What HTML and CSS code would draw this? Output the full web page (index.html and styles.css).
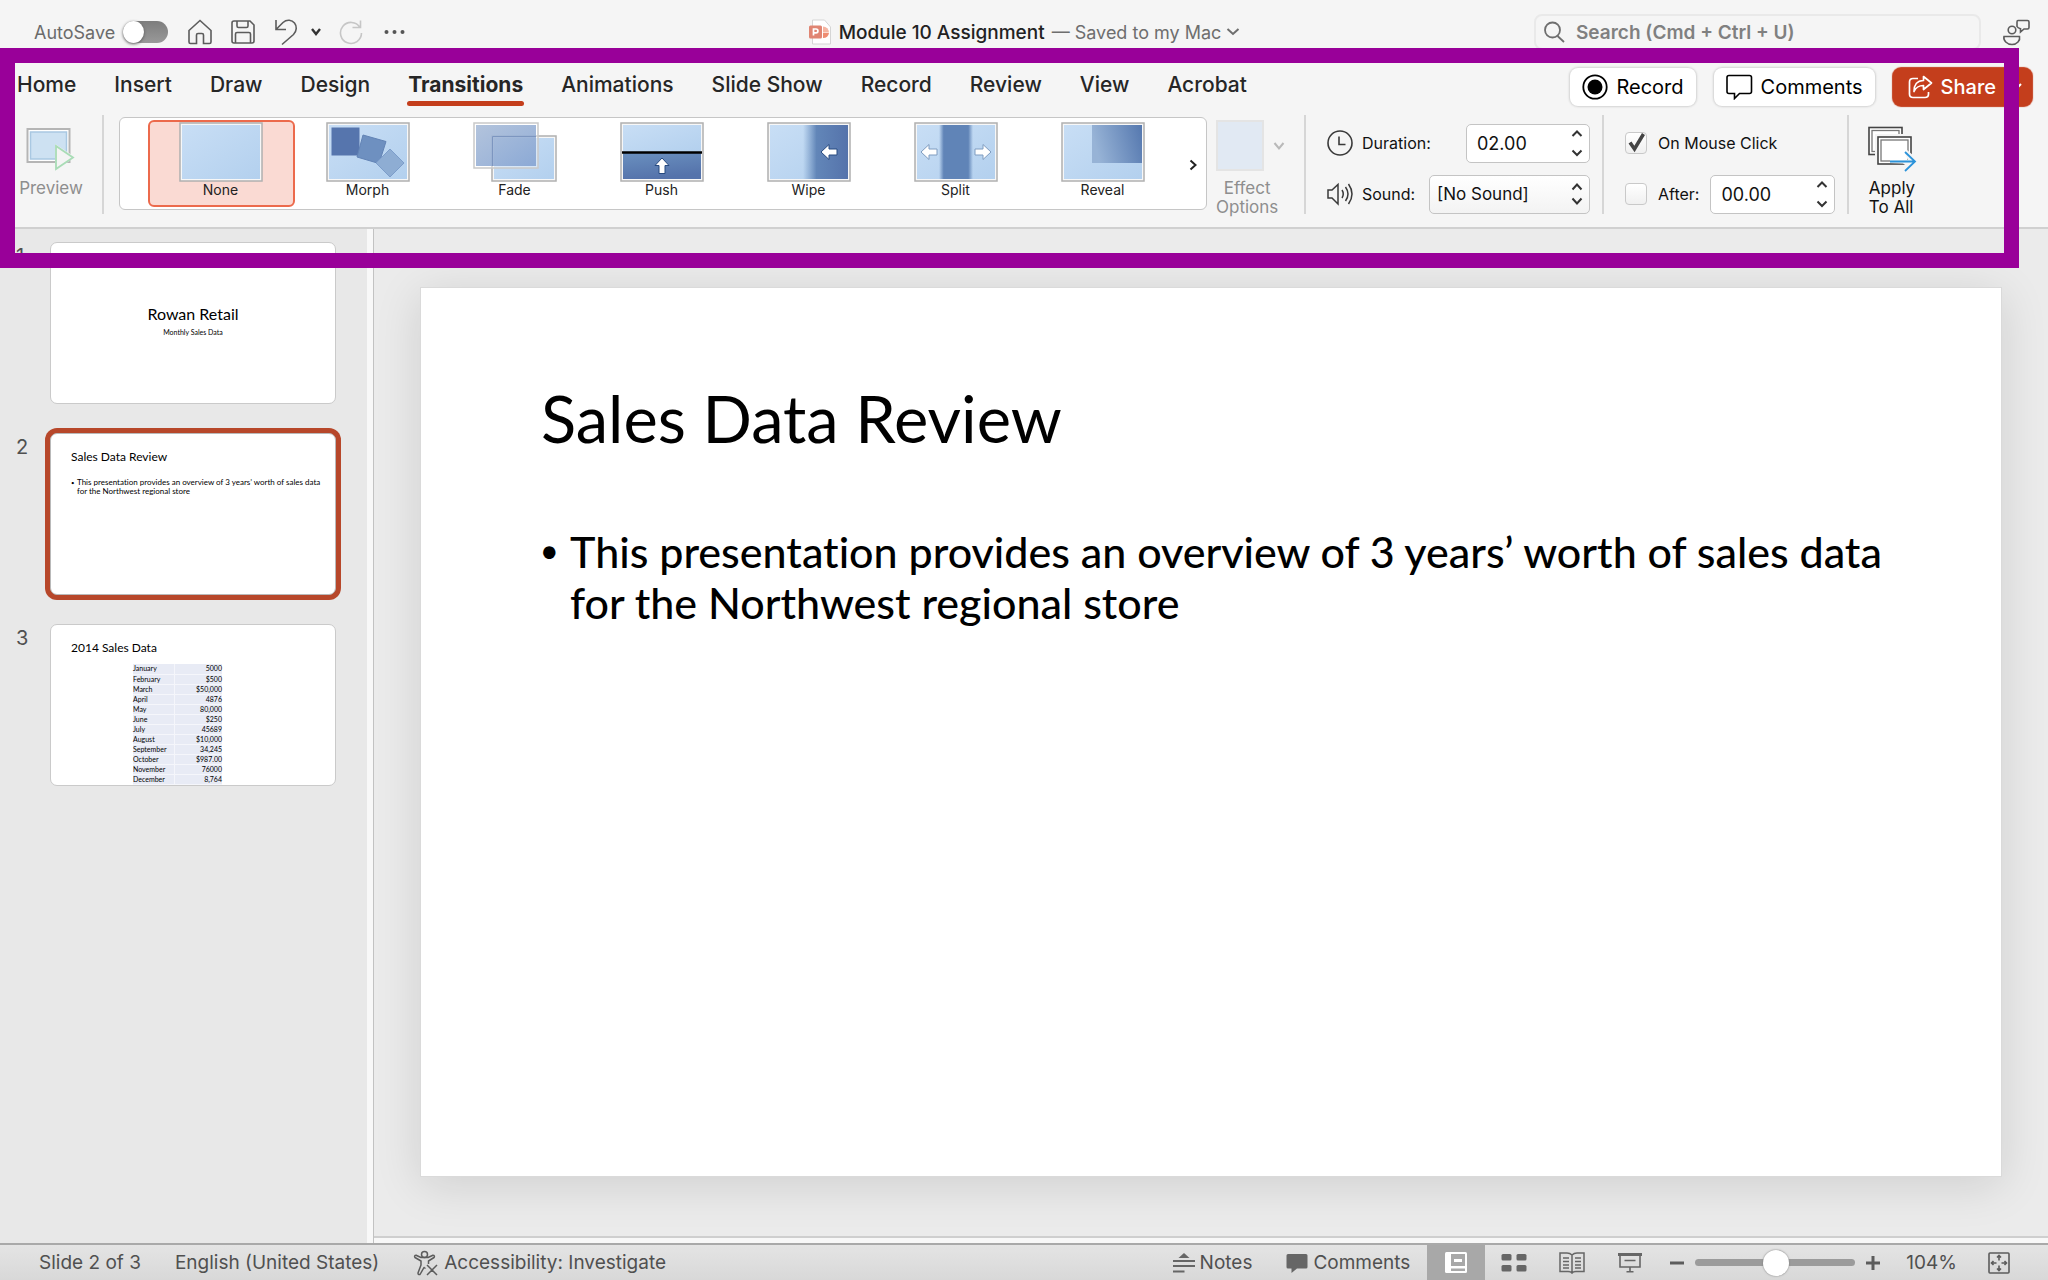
FILE: index.html
```html
<!DOCTYPE html>
<html lang="en">
<head>
<meta charset="utf-8">
<title>Module 10 Assignment</title>
<link rel="stylesheet" href="styles.css">
</head>
<body>
<svg class="defs" aria-hidden="true">
  <defs>
    <linearGradient id="sky" x1="0" y1="0" x2="1" y2="1"><stop offset="0" stop-color="#c8def5"/><stop offset="1" stop-color="#b3d0ee"/></linearGradient>
    <linearGradient id="deep" x1="0" y1="0" x2="0.3" y2="1"><stop offset="0" stop-color="#6a90bf"/><stop offset="1" stop-color="#5573ab"/></linearGradient>
    <linearGradient id="wipe" x1="0" y1="0" x2="1" y2="0"><stop offset="0" stop-color="#6a90bf" stop-opacity="0"/><stop offset="0.3" stop-color="#6286b8"/><stop offset="1" stop-color="#5573ab"/></linearGradient>
    <linearGradient id="split" x1="0" y1="0" x2="1" y2="0"><stop offset="0" stop-color="#6084b7" stop-opacity="0"/><stop offset="0.14" stop-color="#6084b7"/><stop offset="0.86" stop-color="#6084b7"/><stop offset="1" stop-color="#6084b7" stop-opacity="0"/></linearGradient>
    <linearGradient id="reveal" x1="0" y1="0.2" x2="1" y2="0"><stop offset="0" stop-color="#97b3d6"/><stop offset="1" stop-color="#5578af"/></linearGradient>
    <linearGradient id="veil" x1="0" y1="0" x2="1" y2="1"><stop offset="0" stop-color="#a5b9d6"/><stop offset="1" stop-color="#7f9fd0"/></linearGradient>
  </defs>
</svg>

<header class="chrome">
  <div class="titlebar">
    <div class="quick">
      <label class="autosave" for="autosave">AutoSave</label>
      <input class="toggle" type="checkbox" id="autosave">
      <button class="icon-btn" aria-label="Home"><svg width="26" height="26" viewBox="0 0 26 26"><path d="M2 11.5 13 1.5l11 10V23q0 1.5-1.5 1.5h-6V16q0-1.500-1.500-1.500h-4Q9.500 14.500 9.500 16v8.500h-6Q2 24.500 2 23z"/></svg></button>
      <button class="icon-btn" aria-label="Save"><svg width="26" height="26" viewBox="0 0 26 26"><path d="M2 4q0-2 2-2h16l4 4v16q0 2-2 2H4q-2 0-2-2zM7 2v5q0 1.500 1.500 1.500h8Q18 8.500 18 7V2M5.500 24v-9q0-1.500 1.500-1.500h12q1.500 0 1.500 1.500v9"/></svg></button>
      <button class="icon-btn undo" aria-label="Undo"><svg width="26" height="28" viewBox="0 0 26 28"><path d="M3 2v9.500h10M3.500 11 10 4.500C14 1 19 2 21.500 5s2.500 8-1 11.500L9 26.500"/></svg></button>
      <button class="icon-btn bold" aria-label="Undo history"><svg width="12" height="10" viewBox="0 0 12 10"><path d="m2 2 4 5 4-5"/></svg></button>
      <button class="icon-btn faded" aria-label="Redo" disabled><svg width="26" height="26" viewBox="0 0 26 26"><path d="M22 8.500A10.500 10.500 0 1 0 23.500 14M22.500 1.500v7h-8"/></svg></button>
      <button class="icon-btn dots" aria-label="More"><svg width="24" height="8" viewBox="0 0 24 8"><circle cx="3.500" cy="4" r="2"/><circle cx="11.500" cy="4" r="2"/><circle cx="19.500" cy="4" r="2"/></svg></button>
    </div>
    <div class="doc">
      <svg width="24" height="26" viewBox="0 0 24 26"><path d="M4.500 1h12l6 7v17h-18z" fill="#fff" stroke="#d5d5d5"/><path d="M15 7.500a6 6 0 0 1 6 6h-6z" fill="#f5b5a2"/><path d="M15 14h6a6 6 0 0 1-6 5z" fill="#ef8d72"/><rect x="1" y="6.500" width="13" height="13" rx="1.500" fill="#e08573"/><path d="M5.500 16.500v-6.500h2.500a1.800 1.800 0 0 1 0 3.800H5.500" fill="none" stroke="#fff" stroke-width="1.700"/></svg>
      <span class="doc-name">Module 10 Assignment</span>
      <button class="doc-state">— Saved to my Mac <svg width="14" height="10" viewBox="0 0 14 10"><path d="m1.500 2 5.500 5 5.500-5" fill="none" stroke="#6e6e6e" stroke-width="2"/></svg></button>
    </div>
    <div class="finder">
      <div class="search">
        <svg width="24" height="24" viewBox="0 0 24 24"><circle cx="9.500" cy="10" r="7.500"/><path d="m14.500 16 6.500 6"/></svg>
        <input type="text" aria-label="Search" placeholder="Search (Cmd + Ctrl + U)">
      </div>
      <button class="icon-btn" aria-label="Collaboration"><svg width="28" height="28" viewBox="0 0 28 28"><circle cx="10" cy="12" r="3.800"/><path d="M2 18.500h15.500c1 4-2.500 8-7.500 8s-9-4-8-8zM16 2.500h9.500q1.500 0 1.500 1.500v5.500q0 1.500-1.500 1.500H22l-3.500 3v-3.300q-2.800-.7-3.500-2.200V4q0-1.500 1-1.500"/></svg></button>
    </div>
  </div>

  <div class="tabrow">
    <nav class="tabs">
      <a href="#home">Home</a><a href="#insert">Insert</a><a href="#draw">Draw</a><a href="#design">Design</a><a class="current" href="#transitions">Transitions</a><a href="#animations">Animations</a><a href="#slideshow">Slide Show</a><a href="#record">Record</a><a href="#review">Review</a><a href="#view">View</a><a href="#acrobat">Acrobat</a>
    </nav>
    <div class="actions">
      <button class="pill"><svg width="26" height="26" viewBox="0 0 26 26"><circle cx="13" cy="13" r="11.700" fill="none" stroke="#000" stroke-width="1.800"/><circle cx="13" cy="13" r="7.500"/></svg>Record</button>
      <button class="pill"><svg width="27" height="26" viewBox="0 0 27 26"><path d="M3 1.500h20.500q2 0 2 2v14q0 2-2 2H13.500l-5 5v-5H3q-2 0-2-2v-14q0-2 2-2z" fill="none" stroke="#000" stroke-width="1.600"/></svg>Comments</button>
      <button class="pill share"><svg width="25" height="24" viewBox="0 0 25 24"><path d="M10 3.500H5q-3.500 0-3.500 3.500v12q0 3.500 3.500 3.500h12q3.500 0 3.500-3.500v-2M15.500 1.500 23.500 8l-8 6.500v-4c-5 0-7.500 1.500-9.500 6C6 10 9 5.500 15.500 5.500z" fill="none" stroke="#fff" stroke-width="1.700" stroke-linejoin="round"/></svg>Share<svg class="share-more" width="12" height="10" viewBox="0 0 12 10"><path d="m1 2 5 5 5-5" fill="none" stroke="#fff" stroke-width="2"/></svg></button>
    </div>
  </div>

  <div class="ribbon">
    <button class="big preview" disabled>
      <svg width="50" height="46" viewBox="0 0 50 46"><rect x="1.500" y="2" width="42" height="33" fill="#fff" stroke="#b5b5b5" stroke-width="2"/><rect x="4.500" y="5" width="36" height="27" fill="#cde1f2" stroke="#a9c8e2" stroke-width="1.500"/><path d="M29 17v27l20-14z" fill="#f4f4f4"/><path d="M30 19v23l17-11.500z" fill="#f4f4f4" stroke="#a9dcb6" stroke-width="1.800"/></svg>
      <span>Preview</span>
    </button>
    <div class="rule"></div>
    <div class="gallery">
      <button class="tile selected"><svg class="art" viewBox="0 0 84 60"><rect x="1" y="1" width="82" height="58" fill="#f7f7f7" stroke="#b0b0b0" stroke-width="1.500"/><rect x="3" y="3" width="78" height="54" fill="url(#sky)"/></svg>None</button>
      <button class="tile"><svg class="art" viewBox="0 0 84 60"><rect x="1" y="1" width="82" height="58" fill="#f7f7f7" stroke="#b0b0b0" stroke-width="1.500"/><rect x="3" y="3" width="78" height="54" fill="url(#sky)"/><path d="M5.500 5.500h28v28h-28z" fill="#5675ad"/><path d="m37 13 23 6.500-7 22-22-6.500z" fill="#6e90c0" stroke="#6283b5"/><path d="m64 27 14 14-14 14-14-14z" fill="#8eadd3" stroke="#7c9dca"/></svg>Morph</button>
      <button class="tile"><svg class="art" viewBox="0 0 84 60"><rect x="19" y="14" width="64" height="45" fill="#f7f7f7" stroke="#b0b0b0" stroke-width="1.500"/><rect x="21" y="16" width="60" height="41" fill="url(#sky)"/><rect x="1" y="1" width="64" height="45" fill="#fff" fill-opacity=".4" stroke="#c9c9c9" stroke-width="1.500"/><rect x="3" y="3" width="60" height="41" fill="url(#veil)" fill-opacity=".85"/><path d="M19.500 44V14.500H63" fill="none" stroke="#7d96c0"/></svg>Fade</button>
      <button class="tile"><svg class="art" viewBox="0 0 84 60"><rect x="1" y="1" width="82" height="58" fill="#f7f7f7" stroke="#b0b0b0" stroke-width="1.500"/><rect x="3" y="3" width="78" height="27" fill="url(#sky)"/><rect x="3" y="31" width="78" height="26" fill="url(#deep)"/><path d="M2 30.500h80" stroke="#000" stroke-width="2.500"/><path d="m42 36 7 7.500h-4v8h-6v-8h-4z" fill="#fff" stroke="#274a80"/></svg>Push</button>
      <button class="tile"><svg class="art" viewBox="0 0 84 60"><rect x="1" y="1" width="82" height="58" fill="#f7f7f7" stroke="#b0b0b0" stroke-width="1.500"/><rect x="3" y="3" width="78" height="54" fill="url(#sky)"/><rect x="36" y="3" width="45" height="54" fill="url(#wipe)"/><path d="m54 30 8-7.500V27h8v6h-8v4.500z" fill="#fff" stroke="#274a80"/></svg>Wipe</button>
      <button class="tile"><svg class="art" viewBox="0 0 84 60"><rect x="1" y="1" width="82" height="58" fill="#f7f7f7" stroke="#b0b0b0" stroke-width="1.500"/><rect x="3" y="3" width="78" height="54" fill="url(#sky)"/><rect x="25" y="3" width="34" height="54" fill="url(#split)"/><path d="m7 30 8-7.500V27h8v6h-8v4.500zM77 30l-8-7.500V27h-8v6h8v4.500z" fill="#fff" stroke="#7f9cc0"/></svg>Split</button>
      <button class="tile"><svg class="art" viewBox="0 0 84 60"><rect x="1" y="1" width="82" height="58" fill="#f7f7f7" stroke="#b0b0b0" stroke-width="1.500"/><rect x="3" y="3" width="78" height="54" fill="url(#sky)"/><rect x="31" y="3" width="50" height="38" fill="url(#reveal)"/></svg>Reveal</button>
      <button class="next" aria-label="More transitions"><svg width="10" height="12" viewBox="0 0 10 12"><path d="m2.500 1.500 5 4.500-5 4.500" fill="none" stroke="#222" stroke-width="2"/></svg></button>
    </div>
    <button class="big effect" disabled>
      <span class="effect-art"><svg width="48" height="52" viewBox="0 0 48 52"><rect x="1" y="1" width="46" height="49" fill="#e1e9f3" stroke="#e4e4e4" stroke-width="2"/></svg><svg width="12" height="10" viewBox="0 0 12 10"><path d="m1.500 2 4.500 5.500L10.500 2" fill="none" stroke="#b9b9b9" stroke-width="2"/></svg></span>
      <span class="effect-name">Effect<br>Options</span>
    </button>
    <div class="rule"></div>
    <div class="timing">
      <div class="line">
        <svg width="28" height="28" viewBox="0 0 28 28"><circle cx="14" cy="14" r="12" fill="none" stroke="#3a3a3a" stroke-width="1.600"/><path d="M13 7.500v8h6.500" fill="none" stroke="#3a3a3a" stroke-width="1.600"/></svg>
        <label for="duration">Duration:</label>
        <span class="field push"><input id="duration" type="text" value="02.00"><svg width="12" height="28" viewBox="0 0 12 28"><path d="m1.500 7 4.500-4.500L10.500 7M1.500 21.500 6 26l4.500-4.500"/></svg></span>
      </div>
      <div class="line">
        <svg width="28" height="28" viewBox="0 0 28 28"><path d="M2 10v8h4l6 6V4.500l-6 5.500zM16 10q2.500 4 0 8M19.500 7q5 7 0 14M22.500 4q7 10 0 20" fill="none" stroke="#3a3a3a" stroke-width="1.500"/></svg>
        <label for="sound">Sound:</label>
        <span class="field wide"><select id="sound"><option>[No Sound]</option></select><svg width="12" height="28" viewBox="0 0 12 28"><path d="m1.500 9.500 4.500-5 4.500 5M1.500 18.500l4.500 5 4.500-5"/></svg></span>
      </div>
    </div>
    <div class="rule"></div>
    <div class="advance">
      <div class="line">
        <input class="tick" type="checkbox" id="onclick" checked>
        <label for="onclick">On Mouse Click</label>
      </div>
      <div class="line">
        <input class="tick" type="checkbox" id="after">
        <label for="after">After:</label>
        <span class="field"><input type="text" aria-label="Advance after" value="00.00"><svg width="12" height="28" viewBox="0 0 12 28"><path d="m1.500 7 4.500-4.500L10.500 7M1.500 21.500 6 26l4.500-4.500"/></svg></span>
      </div>
    </div>
    <div class="rule"></div>
    <button class="big apply">
      <svg width="50" height="46" viewBox="0 0 50 46" fill="none"><rect x="2" y="1.500" width="33" height="27" fill="#fff" stroke="#444" stroke-width="1.600"/><rect x="5" y="4.500" width="27" height="21" stroke="#777" stroke-width="1.300"/><rect x="8" y="8" width="40" height="34" fill="#f5f5f5"/><rect x="11" y="11" width="33" height="27" fill="#fff" stroke="#444" stroke-width="1.600"/><rect x="14" y="14" width="27" height="21" stroke="#777" stroke-width="1.300"/><path d="M36 37.500 41 41h6V30l-7-6-2 4 3 6H23v3z" fill="#f5f5f5"/><path d="M23 35.500h25M38 26l10 9.500L38 45" stroke="#2b93da" stroke-width="1.800"/></svg>
      <span>Apply<br>To All</span>
    </button>
  </div>
  <div class="frame" aria-hidden="true"></div>
</header>

<main class="work">
  <aside class="rail">
    <div class="entry"><span class="num">1</span>
      <section class="mini cover"><h3>Rowan Retail</h3><p>Monthly Sales Data</p></section></div>
    <div class="entry"><span class="num">2</span>
      <section class="mini active"><h4>Sales Data Review</h4><ul><li>This presentation provides an overview of 3 years’ worth of sales data<br>for the Northwest regional store</li></ul></section></div>
    <div class="entry"><span class="num">3</span>
      <section class="mini"><h4>2014 Sales Data</h4>
        <table>
          <tr><td>January</td><td>5000</td></tr>
          <tr><td>February</td><td>$500</td></tr>
          <tr><td>March</td><td>$50,000</td></tr>
          <tr><td>April</td><td>4876</td></tr>
          <tr><td>May</td><td>80,000</td></tr>
          <tr><td>June</td><td>$250</td></tr>
          <tr><td>July</td><td>45689</td></tr>
          <tr><td>August</td><td>$10,000</td></tr>
          <tr><td>September</td><td>34,245</td></tr>
          <tr><td>October</td><td>$987.00</td></tr>
          <tr><td>November</td><td>76000</td></tr>
          <tr><td>December</td><td>8,764</td></tr>
        </table>
      </section></div>
  </aside>
  <div class="stage">
    <div class="canvas">
      <article class="slide">
        <h1>Sales Data Review</h1>
        <ul><li>This presentation provides an overview of 3 years’ worth of sales data for the Northwest regional store</li></ul>
      </article>
    </div>
    <div class="notes-edge"></div>
  </div>
</main>

<footer class="status">
  <div class="status-left">
    <span>Slide 2 of 3</span>
    <span>English (United States)</span>
    <button class="word"><svg width="26" height="26" viewBox="0 0 26 26"><g fill="none" stroke="#5c5c5c" stroke-width="1.500" stroke-linejoin="round"><circle cx="11.500" cy="4.500" r="3"/><path d="M2.500 5q-1.500 1-.5 2.500l6 3.500v4l-3 8q0 2 2 1.500L11 17.500l1.500 1M20.500 5q1.500 1 .5 2.500L15.500 11v3M2.500 5l5.500 2.500h7L20.500 5M14 15l10 10M24 15 14 25"/></g></svg>Accessibility: Investigate</button>
  </div>
  <div class="status-right">
    <button class="word notes"><svg width="22" height="22" viewBox="0 0 22 22"><path d="m5.500 6 5.500-5 5.500 5z" fill="#666"/><path d="M0 9h22M0 14h22M0 19.500h11.500" stroke="#666" stroke-width="1.800"/></svg>Notes</button>
    <button class="word"><svg width="22" height="22" viewBox="0 0 22 22"><path d="M2 2h18q1.500 0 1.500 1.500V15q0 1.500-1.500 1.500h-9L5.500 21v-4.500H2Q.5 16.500.5 15V3.500Q.5 2 2 2z" fill="#666"/></svg>Comments</button>
    <div class="views">
      <button class="view on" aria-label="Normal view"><svg width="24" height="22" viewBox="0 0 24 22"><rect x="1" y="0" width="22" height="21" rx="1.500" fill="#fff"/><path d="M7 2h14v12H7zM7 16.500h14V19H7z" fill="#a8a8a8"/><path d="M10 7h8v3h-8z" fill="#fff"/></svg></button>
      <button class="view" aria-label="Slide sorter"><svg width="26" height="22" viewBox="0 0 26 22" fill="#666"><rect x="0.500" y="2" width="10" height="6.500" rx="1.500"/><rect x="15.500" y="2" width="10" height="6.500" rx="1.500"/><rect x="0.500" y="13" width="10" height="6.500" rx="1.500"/><rect x="15.500" y="13" width="10" height="6.500" rx="1.500"/></svg></button>
      <button class="view" aria-label="Reading view"><svg width="26" height="22" viewBox="0 0 26 22" fill="none" stroke="#666" stroke-width="1.500"><path d="M13 3Q11 1 8 1H1v18.500h8q3 0 4 1.500 1-1.500 4-1.500h8V1h-7q-3 0-5 2zM13 3v18M4 6h6M4 9.500h6M4 13h6M4 16h6M16 6h6M16 9.500h6M16 13h6M16 16h6"/></svg></button>
      <button class="view" aria-label="Slide show"><svg width="24" height="22" viewBox="0 0 24 22" fill="none" stroke="#666" stroke-width="1.600"><path d="M0 2.500h24" stroke-width="3"/><path d="M2 3.500v11.500h20V3.500M6.500 8.500h11M12 15v4M8.500 19.800h7"/></svg></button>
    </div>
    <div class="zoom">
      <button class="icon-btn" aria-label="Zoom out"><svg width="14" height="14" viewBox="0 0 14 14"><path class="thick" d="M0 7h14"/></svg></button>
      <input type="range" min="0" max="200" value="101" aria-label="Zoom">
      <button class="icon-btn" aria-label="Zoom in"><svg width="14" height="14" viewBox="0 0 14 14"><path class="thick" d="M0 7h14M7 0v14"/></svg></button>
    </div>
    <span>104%</span>
    <button class="icon-btn" aria-label="Fit slide to window"><svg width="22" height="22" viewBox="0 0 22 22"><rect x="1" y="1" width="20" height="20" rx="1"/><path d="M11 8.500V4M9 5.500 11 3.500l2 2M11 13.500V18M9 16.500l2 2 2-2M8.500 11H4M5.500 9l-2 2 2 2M13.500 11H18M16.500 9l2 2-2 2"/></svg></button>
  </div>
</footer>
</body>
</html>
```
FILE: styles.css
```css
* { box-sizing: border-box; }

body {
  margin: 0;
  min-height: 100vh;
  display: flex;
  flex-direction: column;
  background: #ebebeb;
  color: #222;
  font-family: Inter, "Liberation Sans", sans-serif;
  font-size: 17px;
}

button, input, select {
  font: inherit;
  color: inherit;
}

button {
  margin: 0;
  padding: 0;
  border: 0;
  background: none;
}

svg { display: block; flex: none; }
.defs { position: absolute; width: 0; height: 0; }

/* Window header */
.chrome {
  position: relative;
  background: #f5f5f5;
  border-bottom: 2px solid #d0d0d0;
}

/* Highlight drawn over the ribbon */
.frame {
  position: absolute;
  top: 48px;
  left: 0;
  right: 29px;
  height: 220px;
  border: 15px solid #990099;
  z-index: 5;
  pointer-events: none;
}

.titlebar {
  display: grid;
  grid-template-columns: 1fr auto 1fr;
  align-items: center;
  height: 64px;
  padding: 0 18px 0 34px;
}

.quick { display: flex; align-items: center; gap: 17px; }
.autosave { color: #6b6b6b; font-size: 18px; margin-right: -9px; }

.toggle {
  appearance: none;
  width: 45px;
  height: 22px;
  margin: 0 2px 0 0;
  border-radius: 11px;
  background: linear-gradient(#7d7d7d, #999);
  display: flex;
}
.toggle::before {
  content: "";
  width: 21px;
  height: 22px;
  border-radius: 50%;
  background: #fff;
  box-shadow: 0 1px 3px #555;
}

.icon-btn svg { fill: none; stroke: #5c5c5c; stroke-width: 1.6; }
.icon-btn .thick { stroke-width: 3; }
.icon-btn.bold { margin: 0 -1px 0 -6px; }
.icon-btn.bold svg { stroke: #333; stroke-width: 2.4; }
.icon-btn.faded svg { stroke: #c6c6c6; }
.icon-btn.dots { margin-left: 2px; }
.icon-btn.dots svg { fill: #555; stroke: none; }

.doc { display: flex; align-items: center; gap: 7px; padding-right: 16px; font-size: 19px; }
.doc-name { font-weight: 500; }
.doc-state { display: flex; align-items: center; gap: 5px; color: #6e6e6e; font-size: 18px; }

.finder { display: flex; justify-content: flex-end; align-items: center; gap: 21px; }
.search {
  display: flex;
  align-items: center;
  gap: 9px;
  flex: 0 1 447px;
  height: 36px;
  padding-left: 7px;
  border: 2px solid #e9e9e9;
  border-radius: 8px;
}
.search svg { fill: none; stroke: #6e6e6e; stroke-width: 1.8; }
.search input {
  flex: 1;
  min-width: 0;
  border: 0;
  padding: 0;
  background: none;
  outline: 0;
  font-size: 19px;
  font-weight: 600;
}
.search input::placeholder { color: #808080; opacity: 1; }

.tabrow {
  display: flex;
  justify-content: space-between;
  align-items: flex-start;
  height: 50px;
  padding: 3px 16px 0 17px;
}
.tabs { display: flex; gap: 38px; font-size: 21px; font-weight: 500; }
.tabs a {
  color: #262626;
  text-decoration: none;
  line-height: 35px;
}
.tabs .current { font-weight: 700; position: relative; }
.tabs .current::after {
  content: "";
  position: absolute;
  left: -1px;
  right: -1px;
  top: 34px;
  height: 5px;
  border-radius: 3px;
  background: #c43e1c;
}

.actions { display: flex; gap: 18px; margin-top: 1px; font-size: 20px; }
.pill {
  display: flex;
  align-items: center;
  gap: 8px;
  height: 38px;
  padding: 0 12px;
  border-radius: 8px;
  background: #fff;
  color: #000;
  box-shadow: 0 0 2px 1px #d2d2d2;
}
.pill.share {
  background: #c43e1c;
  color: #fff;
  font-weight: 500;
  padding: 0 10px 0 15px;
  box-shadow: 0 0 1px 1px #c43e1c;
}
.share-more { margin-left: 6px; }

.ribbon { display: flex; height: 113px; }
.rule { width: 2px; height: 99px; margin-top: 1px; background: #d6d6d6; }

.big {
  display: flex;
  flex-direction: column;
  align-items: center;
  line-height: 19px;
}
.preview { width: 102px; padding: 13px 0 0; color: #8e8e8e; }
.preview span { margin-top: 6px; }

.gallery {
  display: flex;
  margin: 3px 9px 0 15px;
  height: 93px;
  padding: 2px 0 0 28px;
  border: 1px solid #c6c6c6;
  border-radius: 6px;
  background: #fff;
}
.tile {
  display: flex;
  flex-direction: column;
  align-items: center;
  width: 147px;
  height: 87px;
  padding-right: 2px;
  border: 2px solid transparent;
  border-radius: 6px;
  font-size: 14px;
  line-height: 16px;
}
.tile.selected { background: #fadad3; border-color: #ec6a4c; }
.art { width: 84px; height: 60px; }
.next { width: 29px; padding-left: 2px; display: flex; align-items: center; justify-content: center; }

.effect { width: 88px; padding-top: 6px; color: #8e8e8e; align-items: flex-start; }
.effect-art { display: flex; align-items: center; gap: 9px; }
.effect-name { margin-top: 7px; }

.timing, .advance { display: flex; flex-direction: column; gap: 11px; padding-top: 9px; }
.timing { width: 296px; padding-left: 20px; padding-right: 12px; }
.advance { width: 243px; padding-left: 21px; padding-right: 12px; }
.line { display: flex; align-items: center; height: 40px; gap: 8px; font-size: 16px; color: #111; }
.advance .line { gap: 11px; }

.field {
  display: flex;
  align-items: center;
  flex: 1;
  height: 39px;
  padding: 0 6px 0 10px;
  border: 1px solid #c4c4c4;
  border-radius: 5px;
  background: #fff;
  font-size: 18px;
}
.field.push { flex: none; width: 124px; margin-left: auto; }
.field.wide { flex: none; width: 161px; margin-left: auto; padding-left: 7px; font-size: 17px; background: linear-gradient(#fff, #f3f3f3); }
.field svg { fill: none; stroke: #333; stroke-width: 2; }
.field input, .field select {
  appearance: none;
  flex: 1;
  width: 0;
  border: 0;
  padding: 0;
  background: none;
  outline: 0;
}

.tick {
  appearance: none;
  width: 22px;
  height: 22px;
  margin: 0;
  border: 1px solid #c9c9c9;
  border-radius: 4px;
  background: linear-gradient(#fff, #f0f0f0);
}
.tick:checked {
  background: url("data:image/svg+xml,%3Csvg xmlns='http://www.w3.org/2000/svg' viewBox='0 0 20 20'%3E%3Cpath d='M4 9.500l4.500 6.500L17.500 1' fill='none' stroke='%23444' stroke-width='3.500'/%3E%3C/svg%3E") center / 20px 20px no-repeat, linear-gradient(#fff, #f0f0f0);
}

.apply { width: 64px; padding: 12px 0 0; margin-left: 11px; color: #111; }
.apply span { margin-top: 7px; text-align: left; }

/* Slide list and editing area */
.work { flex: 1; display: flex; }
.rail {
  flex: none;
  width: 374px;
  padding: 13px 0 20px;
  background: #e8e8e8;
  border-right: 1px solid #c2c2c2;
  box-shadow: inset -6px 0 #f8f8f8;
  display: flex;
  flex-direction: column;
  gap: 29px;
}
.entry { display: flex; }
.num { width: 50px; padding: 2px 0 0 16px; font-size: 20px; line-height: 24px; color: #505050; }
.mini {
  position: relative;
  width: 286px;
  height: 162px;
  margin: 0;
  padding: 0 20px;
  border: 1px solid #cacaca;
  border-radius: 7px;
  background: #fff;
  color: #000;
  font-family: Lato, "Open Sans", sans-serif;
  font-size: 7px;
  font-variant-ligatures: none;
  overflow: hidden;
}
.mini.active {
  border-color: #b9b9b9;
  box-shadow: 0 0 0 5px #b7472a;
}
.mini h3, .mini h4 { margin: 0; font-weight: 400; }
.mini h3 { font-size: 16px; line-height: 20px; margin-top: 61px; text-align: center; }
.cover p { margin: 3px 0 0; line-height: 10px; text-align: center; }
.mini h4 { font-size: 12px; line-height: 16px; margin-top: 15px; }
.mini ul { margin: 13px 0 0; padding: 0 0 0 6px; line-height: 9px; font-size: 8px; list-style: none; white-space: nowrap; }
.mini li::before { content: "•"; float: left; margin-left: -6px; font-size: 6px; }
.mini table { width: 89px; margin: 8px 0 0 62px; border-collapse: collapse; background: #e8ebf5; }
.mini td { height: 10px; padding: 0; line-height: 9px; border-bottom: 1px solid #f5f6fb; }
.mini td:first-child { border-right: 1px solid #f5f6fb; width: 41px; }
.mini td:last-child { text-align: right; }

.stage { flex: 1; min-width: 0; display: flex; flex-direction: column; }
.canvas { flex: 1; padding: 58px 46px 20px; }
.slide {
  aspect-ratio: 16 / 9;
  padding: 90px 100px 90px 120px;
  border: 1px solid #dadada;
  background: #fff;
  color: #000;
  font-family: Lato, "Open Sans", sans-serif;
  font-variant-ligatures: none;
  box-shadow: 0 8px 44px rgba(0, 0, 0, 0.12);
}
.slide h1 { margin: 0; font-size: 65px; line-height: 80px; font-weight: 400; }
.slide ul { margin: 68px 0 0; padding: 0 0 0 29px; font-size: 43px; line-height: 51px; font-weight: 500; list-style: none; }
.slide li::before { content: "•"; float: left; margin-left: -30px; font-size: 32px; line-height: 48px; }
.notes-edge { height: 7px; border-top: 2px solid #cfcfcf; background: #f8f8f8; }

/* Status bar */
.status {
  display: flex;
  justify-content: space-between;
  height: 37px;
  border-top: 2px solid #a9a9a9;
  background: linear-gradient(#e4e4e4, #d8d8d8);
  color: #505050;
  font-size: 19px;
}
.status-left, .status-right, .word, .zoom { display: flex; align-items: center; }
.status-left { gap: 34px; padding-left: 39px; }
.status-right { padding-right: 38px; }
.word { gap: 5px; }
.notes { margin-right: 34px; }
.views { display: flex; align-self: stretch; margin-left: 17px; }
.view { width: 58px; display: flex; align-items: center; justify-content: center; }
.view.on { background: #a8a8a8; }
.zoom { gap: 11px; margin: 0 26px 0 11px; }
.zoom input {
  appearance: none;
  width: 160px;
  height: 7px;
  margin: 0;
  border-radius: 4px;
  background: #9b9b9b;
}
.zoom input::-webkit-slider-thumb {
  appearance: none;
  width: 26px;
  height: 26px;
  border-radius: 50%;
  background: #fff;
  box-shadow: 0 0 2px #777;
}
.status-right > .icon-btn { margin-left: 31px; }
```
